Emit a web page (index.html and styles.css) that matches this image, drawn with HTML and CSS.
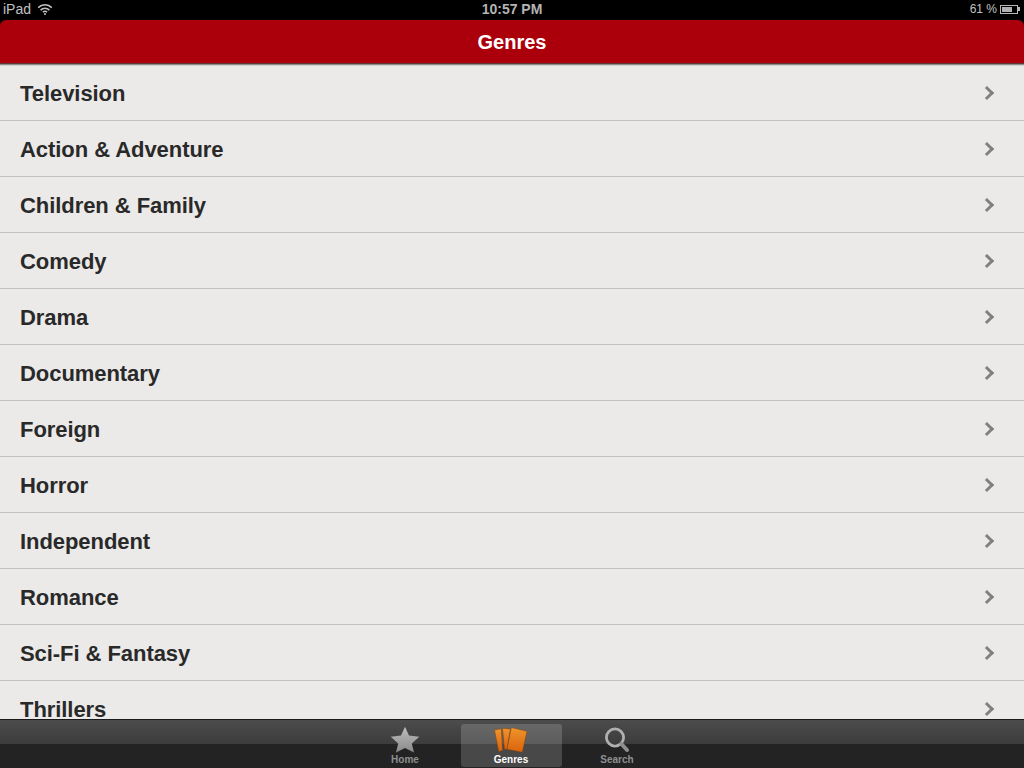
FILE: index.html
```html
<!DOCTYPE html>
<html lang="en">
<head>
    <meta charset="UTF-8">
    <meta name="viewport" content="width=device-width, initial-scale=1.0">
    <title>Genres</title>
    <link rel="stylesheet" href="styles.css">
</head>
<body>
    <div class="app">
        <div class="status-bar">
            <div class="status-left">
                <span>iPad</span>
                <svg class="wifi" width="16" height="12" viewBox="0 0 16 12">
                    <path d="M1.2 4.6 A9.8 9.8 0 0 1 14.8 4.6" fill="none" stroke="#c4c4c4" stroke-width="1.5"/>
                    <path d="M3.6 7.1 A6.4 6.4 0 0 1 12.4 7.1" fill="none" stroke="#c4c4c4" stroke-width="1.5"/>
                    <path d="M5.9 9.3 A3 3 0 0 1 10.1 9.3" fill="none" stroke="#c4c4c4" stroke-width="1.5"/>
                    <circle cx="8" cy="11" r="1" fill="#c4c4c4"/>
                </svg>
            </div>
            <div class="status-time">10:57 PM</div>
            <div class="status-right">
                <span>61 %</span>
                <div class="battery"><div class="battery-fill"></div></div>
                <div class="battery-tip"></div>
            </div>
        </div>

        <div class="nav-bar"><span>Genres</span></div>

        <div class="genre-list">
            <div class="genre-row"><span>Television</span><i class="chevron"></i></div>
            <div class="genre-row"><span>Action &amp; Adventure</span><i class="chevron"></i></div>
            <div class="genre-row"><span>Children &amp; Family</span><i class="chevron"></i></div>
            <div class="genre-row"><span>Comedy</span><i class="chevron"></i></div>
            <div class="genre-row"><span>Drama</span><i class="chevron"></i></div>
            <div class="genre-row"><span>Documentary</span><i class="chevron"></i></div>
            <div class="genre-row"><span>Foreign</span><i class="chevron"></i></div>
            <div class="genre-row"><span>Horror</span><i class="chevron"></i></div>
            <div class="genre-row"><span>Independent</span><i class="chevron"></i></div>
            <div class="genre-row"><span>Romance</span><i class="chevron"></i></div>
            <div class="genre-row"><span>Sci-Fi &amp; Fantasy</span><i class="chevron"></i></div>
            <div class="genre-row"><span>Thrillers</span><i class="chevron"></i></div>
        </div>

        <div class="tab-bar">
            <div class="tab">
                <svg width="32" height="29" viewBox="0 0 32 29">
                    <defs>
                        <linearGradient id="grey" x1="0" y1="0" x2="0" y2="1">
                            <stop offset="0" stop-color="#bdbdbd"/>
                            <stop offset="1" stop-color="#8a8a8a"/>
                        </linearGradient>
                    </defs>
                    <path d="M16 2.7 L20 11.5 L30.3 12.8 L22.8 19.5 L25 28.5 L16 24 L7 28.5 L9.2 19.5 L1.7 12.8 L12 11.5 Z" fill="url(#grey)"/>
                </svg>
                <span>Home</span>
            </div>
            <div class="tab tab-active">
                <svg width="34" height="29" viewBox="0 0 34 29">
                    <defs>
                        <linearGradient id="orange" x1="0" y1="0" x2="0" y2="1">
                            <stop offset="0" stop-color="#f0952c"/>
                            <stop offset="1" stop-color="#d9620c"/>
                        </linearGradient>
                    </defs>
                    <path d="M0.5 6 L7.3 4.7 L8.5 26.5 L4.7 27.5 Z" fill="url(#orange)" stroke="#7a4312" stroke-width="0.5" stroke-linejoin="round"/>
                    <path d="M8.5 4.3 L16.5 5 L13 25.3 L10.5 25.3 Z" fill="url(#orange)" stroke="#7a4312" stroke-width="0.5" stroke-linejoin="round"/>
                    <path d="M17.3 3.5 L33 7.3 L28.3 28.3 L13 25.3 Z" fill="url(#orange)" stroke="#7a4312" stroke-width="0.5" stroke-linejoin="round"/>
                </svg>
                <span>Genres</span>
            </div>
            <div class="tab">
                <svg width="32" height="29" viewBox="0 0 32 29">
                    <circle cx="14" cy="13.5" r="8.6" fill="none" stroke="#b0b0b0" stroke-width="2.8"/>
                    <path d="M20.5 20 L26 26" stroke="#8e8e8e" stroke-width="4" stroke-linecap="round"/>
                </svg>
                <span>Search</span>
            </div>
        </div>
    </div>
</body>
</html>
```

FILE: styles.css
```css
html, body {
    margin: 0;
    padding: 0;
}
body {
    font-family: "Liberation Sans", Arial, sans-serif;
    background: #000;
}
.app {
    width: 1024px;
    height: 768px;
    display: flex;
    flex-direction: column;
    overflow: hidden;
}
.status-bar {
    height: 20px;
    flex: none;
    background: #000;
    color: #c0c0c0;
    display: grid;
    grid-template-columns: 1fr auto 1fr;
    align-items: center;
    font-size: 14px;
    padding: 0 4px 2px 3px;
    box-sizing: border-box;
}
.status-left {
    display: flex;
    align-items: center;
    gap: 6px;
}
.status-time {
    font-size: 14px;
    font-weight: bold;
    color: #b4b4b4;
    margin-left: 1px;
}
.status-right {
    display: flex;
    align-items: center;
    justify-content: flex-end;
    font-size: 12px;
}
.battery {
    border: 1px solid #b8b8b8;
    margin-left: 3px;
    padding: 1px;
    width: 14px;
    height: 5px;
}
.battery-fill {
    width: 10px;
    height: 100%;
    background: #b0b0b0;
}
.battery-tip {
    width: 2px;
    height: 4px;
    background: #b8b8b8;
}
.nav-bar {
    height: 44px;
    flex: none;
    box-sizing: border-box;
    background: #ab000c;
    border-radius: 6px 6px 0 0;
    border-bottom: 1px solid #5f3a3a;
    color: #fff;
    font-size: 20px;
    font-weight: bold;
    display: flex;
    align-items: center;
    justify-content: center;
}
.nav-bar span {
    padding-top: 2px;
}
.genre-list {
    flex: 1;
    min-height: 0;
    overflow: hidden;
    background: #ebeae8;
    border-top: 1px solid #8c8c8c;
    box-shadow: inset 0 1px 0 #cfcfcd;
}
.genre-row {
    height: 55px;
    border-bottom: 1px solid #c2c2c0;
    display: flex;
    align-items: center;
    justify-content: space-between;
    padding: 0 32px 0 20px;
    font-size: 22px;
    font-weight: bold;
    letter-spacing: -0.06px;
    color: #292929;
}
.genre-row span {
    padding-top: 2px;
}
.chevron {
    width: 7px;
    height: 7px;
    border-top: 3px solid #808080;
    border-right: 3px solid #808080;
    transform: rotate(45deg);
}
.tab-bar {
    height: 49px;
    flex: none;
    box-sizing: border-box;
    border-top: 1px solid #1a1a1a;
    background: linear-gradient(to bottom, #4c4c4c 0, #3c3c3c 24px, #232323 24px, #232323 100%);
    display: flex;
    justify-content: center;
    gap: 5px;
    padding: 4px 2px 1px 0;
}
.tab {
    width: 101px;
    display: flex;
    flex-direction: column;
    align-items: center;
    color: #8f8f8f;
    font-size: 10px;
    font-weight: bold;
    border-radius: 3px;
}
.tab svg {
    display: block;
    margin-bottom: 1px;
}
.tab span {
    line-height: 12px;
}
.tab-active {
    background: rgba(255, 255, 255, 0.17);
    color: #fff;
}
```
